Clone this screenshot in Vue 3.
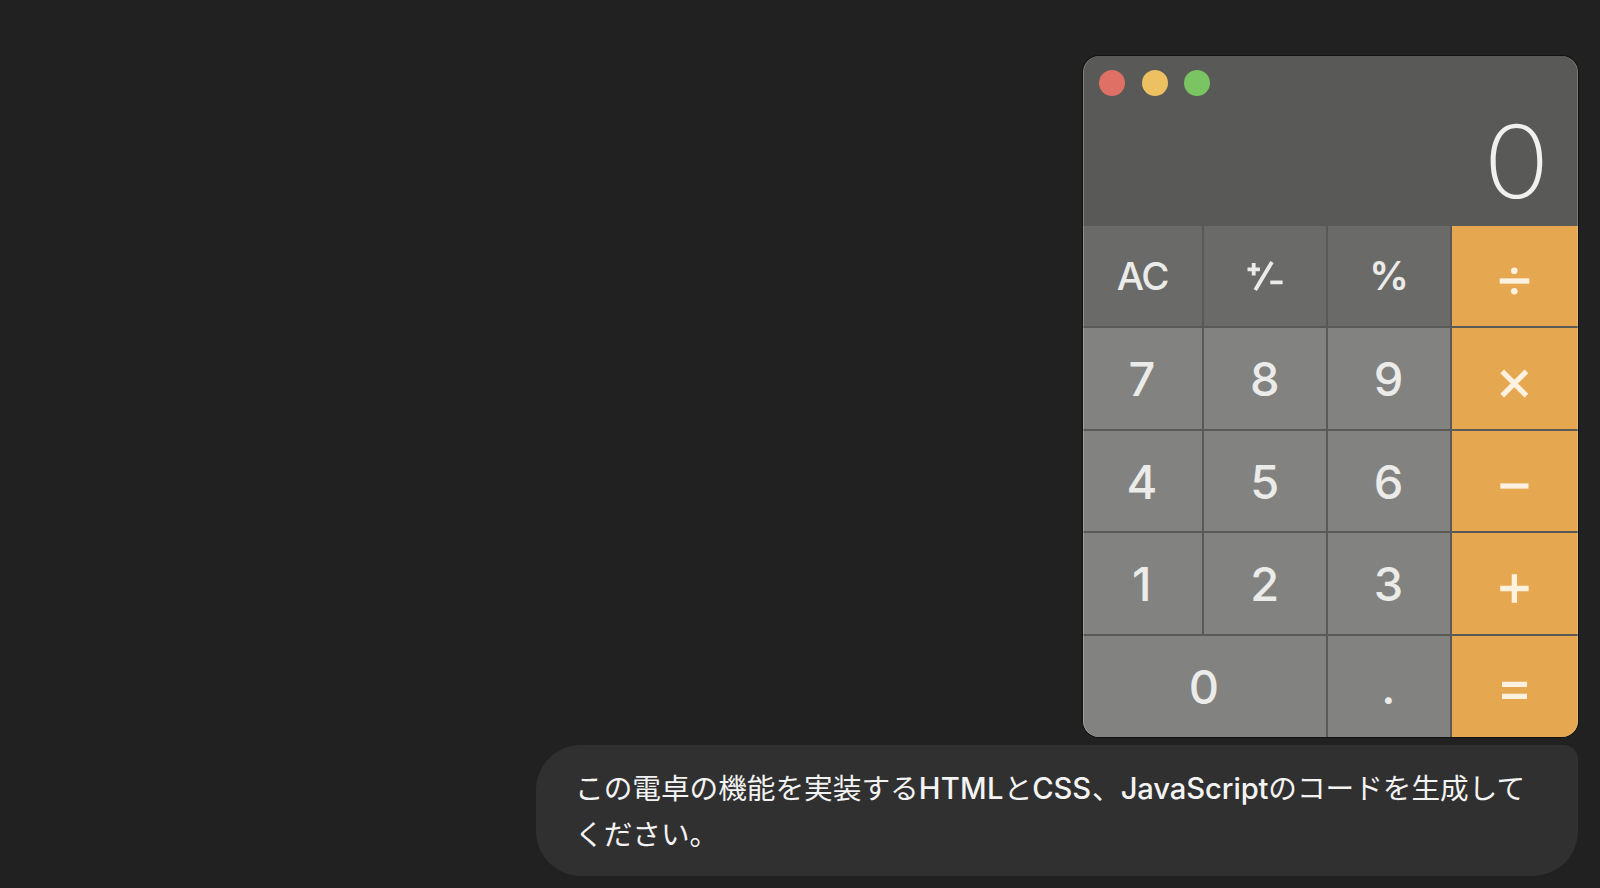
<script setup>
import { ref } from 'vue'

const display = ref('0')

const lights = ['red', 'yellow', 'green']

const keys = [
    { label: 'AC', type: 'func' },
    { icon: 'sign', type: 'func' },
    { label: '%', type: 'func percent' },
    { icon: 'divide', type: 'op' },
    { label: '7', type: 'digit' },
    { label: '8', type: 'digit' },
    { label: '9', type: 'digit' },
    { icon: 'multiply', type: 'op' },
    { label: '4', type: 'digit' },
    { label: '5', type: 'digit' },
    { label: '6', type: 'digit' },
    { icon: 'minus', type: 'op' },
    { label: '1', type: 'digit' },
    { label: '2', type: 'digit' },
    { label: '3', type: 'digit' },
    { icon: 'plus', type: 'op' },
    { label: '0', type: 'digit wide' },
    { label: '.', type: 'digit' },
    { icon: 'equals', type: 'op' }
]

// drawn in a 40x40 box around the key's centre
const icons = {
    sign: 'M2.5 13.3H14.9M8.7 7.1V19.5M10.2 34L27 6M25.3 26.4H37.6',
    divide: 'M4.7 25H34.3',
    multiply: 'M7.2 12.4L31.4 36.6M31.4 12.4L7.2 36.6',
    minus: 'M5.3 25H33.5',
    plus: 'M5.2 24.5H33.6M19.4 10.3V38.7',
    equals: 'M7 17.4H32M7 29.4H32'
}
</script>

<template>
    <div class="chat">
        <div class="calculator">
            <div class="screen">
                <div class="lights">
                    <span v-for="light in lights" :key="light" class="light" :class="light"></span>
                </div>
                <div class="display"><span>{{ display }}</span></div>
            </div>
            <div class="keys">
                <button v-for="(key, i) in keys" :key="i" class="key" :class="key.type">
                    <svg v-if="key.icon" :class="key.icon" viewBox="0 0 40 40">
                        <path :d="icons[key.icon]" />
                        <template v-if="key.icon === 'divide'">
                            <circle cx="19.3" cy="14.8" r="3.3" />
                            <circle cx="19.3" cy="35.3" r="3.3" />
                        </template>
                    </svg>
                    <template v-else>{{ key.label }}</template>
                </button>
            </div>
        </div>
        <div class="message">
            この電卓の機能を実装する<span class="latin html">HTML</span>と<span class="latin css">CSS</span>、<span class="latin js">JavaScript</span>のコードを生成して<br>ください。
        </div>
    </div>
</template>

<style>
body {
    background-color: #212121;
}
</style>

<style scoped>
.chat {
    display: flex;
    flex-direction: column;
    align-items: flex-end;
    gap: 8px;
    box-sizing: border-box;
    height: 888px;
    padding: 56px 22px 0 0;
    overflow: hidden;
    background-color: #212121;
    font-family: Inter, "Noto Sans CJK JP", sans-serif;
}

/* calculator */
.calculator {
    position: relative;
    width: 495.5px;
    height: 681px;
    overflow: hidden;
    border-radius: 16px;
    background-color: #595957;
    box-shadow: 0 0 0 1px #121212;
}
/* light rim over the window's edge */
.calculator::after {
    content: "";
    position: absolute;
    inset: 0;
    border-radius: 16px;
    box-shadow: inset 1px 0 0 rgba(255, 255, 255, 0.25), inset -1px 0 0 rgba(255, 255, 255, 0.2);
    pointer-events: none;
}
.screen {
    display: flex;
    flex-direction: column;
    height: 170px;
}
.lights {
    display: flex;
    gap: 16.7px;
    padding: 14px 16.5px 0;
}
.light {
    width: 26px;
    height: 26px;
    border-radius: 50%;
}
.red {
    background-color: #de7066;
}
.yellow {
    background-color: #edc162;
}
.green {
    background-color: #7ac463;
}
.display {
    display: flex;
    justify-content: flex-end;
    padding: 14px 30.5px 0 0;
    color: #f0f0ee;
    font-size: 101px;
    font-weight: 220;
    line-height: 103px;
}
.display span {
    transform: scaleX(1.09);
}

/* keys */
.keys {
    display: grid;
    grid-template-columns: 119.7px 122px 121.5px 126.3px;
    grid-template-rows: 100px 101px 100px 101px 101px;
    gap: 2px;
}
.key {
    display: flex;
    align-items: center;
    justify-content: center;
    margin: 0;
    padding: 0;
    border: 0;
    color: #ebebe9;
    font-family: inherit;
}
.func {
    background-color: #6a6a68;
    font-size: 38.5px;
    font-weight: 500;
    letter-spacing: -1.4px;
}
.percent {
    padding-right: 1px;
    font-size: 39.5px;
    font-weight: 600;
}
.digit {
    padding-right: 1px;
    background-color: #828280;
    font-size: 47px;
    font-weight: 500;
}
.op {
    background-color: #e5a750;
    color: #fdf1df;
}
.wide {
    grid-column: span 2;
}
.key svg {
    width: 40px;
    height: 40px;
    fill: none;
    stroke: currentColor;
    stroke-width: 5.3;
}
.key svg.sign {
    stroke-width: 3.8;
}
.key circle {
    fill: currentColor;
    stroke: none;
}

/* message bubble */
.message {
    box-sizing: border-box;
    width: 1042px;
    height: 131px;
    padding: 20.5px 0 0 39px;
    border-radius: 45px 14px 45px 45px;
    background-color: #303030;
    color: #f3f3f3;
    font-size: 28.65px;
    line-height: 46.5px;
    white-space: nowrap;
}
.latin {
    display: inline-block;
    font-size: 29.2px;
    font-weight: 450;
}
.html {
    width: 85px;
    letter-spacing: 0.3px;
}
.css {
    width: 59.7px;
    letter-spacing: -0.2px;
}
.js {
    width: 147.6px;
    letter-spacing: -0.1px;
}
</style>
